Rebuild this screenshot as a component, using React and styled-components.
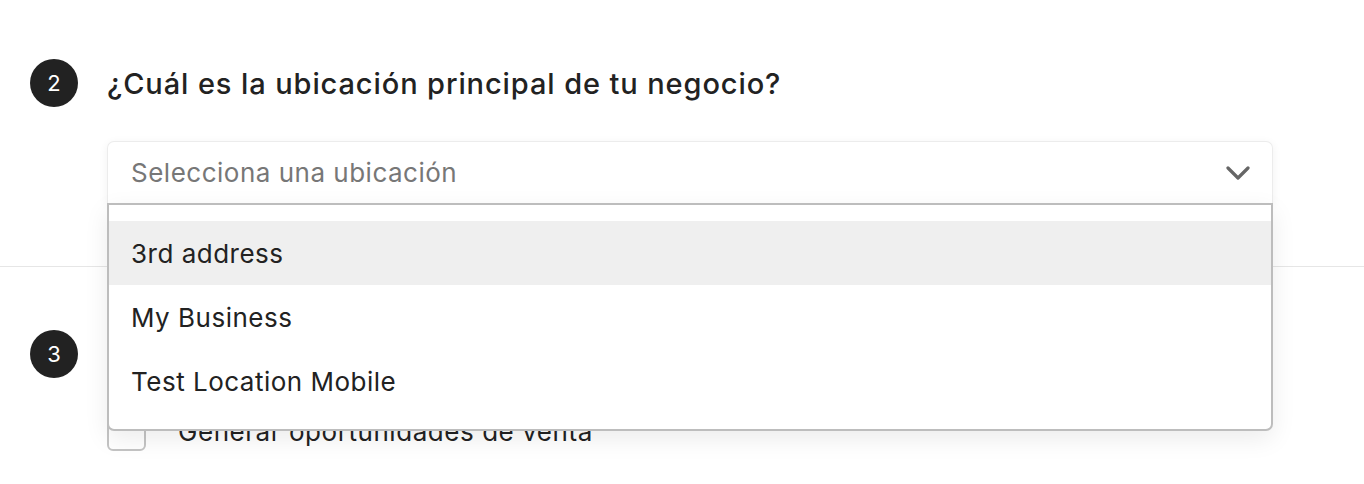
import React from 'react';
import styled, { createGlobalStyle } from 'styled-components';

const GlobalStyle = createGlobalStyle`
  html, body {
    margin: 0;
    padding: 0;
    background: #ffffff;
    font-family: Inter, "Noto Sans", "Liberation Sans", sans-serif;
    color: #222222;
  }
`;

const Page = styled.div`
  width: 1364px;
  height: 484px;
  overflow: hidden;
  background: #fff;
`;

const Step = styled.section`
  display: grid;
  grid-template-columns: 48px 1fr;
  column-gap: 29px;
  padding: ${p => p.$padding};
  border-bottom: ${p => (p.$divider ? '1px solid #e6e6e6' : 'none')};
`;

const Badge = styled.div`
  width: 48px;
  height: 48px;
  border-radius: 50%;
  background: #222222;
  color: #fff;
  display: flex;
  align-items: center;
  justify-content: center;
  font-size: 22px;
  font-weight: 400;
`;

const Body = styled.div`
  display: flex;
  flex-direction: column;
  gap: ${p => p.$gap || '0px'};
  padding-right: 91px;
`;

const Title = styled.h2`
  margin: 0;
  height: 48px;
  display: flex;
  align-items: center;
  font-size: 29px;
  font-weight: 500;
  color: #222;
  letter-spacing: 0.9px;
`;

const SelectWrap = styled.div`
  position: relative;
`;

const SelectBox = styled.div`
  height: 62px;
  box-sizing: border-box;
  border: 1px solid #ececec;
  border-bottom: none;
  border-radius: 7px 7px 0 0;
  box-shadow: 0 2px 10px rgba(0, 0, 0, 0.06);
  display: flex;
  align-items: center;
  justify-content: space-between;
  padding: 0 22px 0 23px;
  background: #fff;
`;

const Placeholder = styled.span`
  font-size: 26px;
  letter-spacing: 0.5px;
  color: #777;
`;

const Menu = styled.ul`
  position: absolute;
  top: 62px;
  left: 0;
  right: 0;
  margin: 0;
  padding: 16px 0;
  list-style: none;
  background: #fff;
  border: 2px solid #bdbdbd;
  border-radius: 0 0 7px 7px;
  box-shadow: 0 8px 24px rgba(0, 0, 0, 0.08);
  z-index: 5;
`;

const Option = styled.li`
  height: 64px;
  display: flex;
  align-items: center;
  padding-left: 22px;
  font-size: 26px;
  letter-spacing: 0.5px;
  color: #222;
  background: ${p => (p.$active ? '#efefef' : '#fff')};
`;

const CheckRow = styled.label`
  display: flex;
  align-items: center;
  gap: 32px;
  font-size: 26px;
  letter-spacing: 0.55px;
  color: #222;
`;

const Checkbox = styled.span`
  width: 39px;
  height: 39px;
  box-sizing: border-box;
  border: 2px solid #c4c4c4;
  border-radius: 6px;
  flex: none;
`;

const Chevron = () => (
  <svg width="24" height="14" viewBox="0 0 24 14" fill="none">
    <path d="M2 2l10 10L22 2" stroke="#666" strokeWidth="3.2" strokeLinecap="round" strokeLinejoin="round" />
  </svg>
);

const options = ['3rd address', 'My Business', 'Test Location Mobile'];

export default function App() {
  return (
    <Page>
      <GlobalStyle />
      <Step $padding="59px 0 63px 30px" $divider>
        <Badge>2</Badge>
        <Body $gap="34px">
          <Title>¿Cuál es la ubicación principal de tu negocio?</Title>
          <SelectWrap>
            <SelectBox>
              <Placeholder>Selecciona una ubicación</Placeholder>
              <Chevron />
            </SelectBox>
            <Menu>
              {options.map((o, i) => (
                <Option key={o} $active={i === 0}>{o}</Option>
              ))}
            </Menu>
          </SelectWrap>
        </Body>
      </Step>
      <Step $padding="63px 0 0 30px">
        <Badge>3</Badge>
        <Body $gap="34px">
          <Title>¿Cuál es tu objetivo principal?</Title>
          <CheckRow>
            <Checkbox />
            Generar oportunidades de venta
          </CheckRow>
        </Body>
      </Step>
    </Page>
  );
}
